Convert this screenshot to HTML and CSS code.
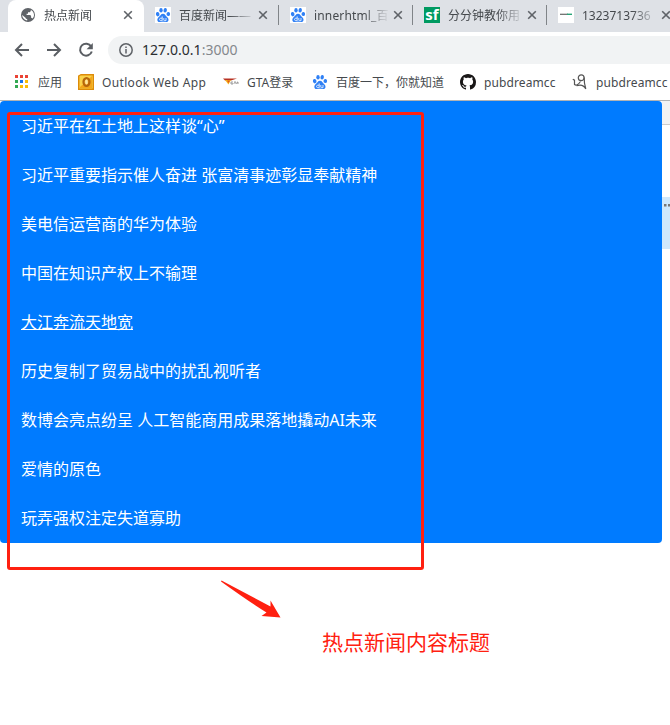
FILE: index.html
```html
<!DOCTYPE html>
<html lang="zh-CN">
<head>
<meta charset="utf-8">
<title>热点新闻</title>
<link rel="stylesheet" href="styles.css">
</head>
<body>
<svg class="defs" width="0" height="0">
  <symbol id="paw" viewBox="0 0 16 16">
    <g fill="#2f80f5">
      <ellipse cx="2.7" cy="7.2" rx="1.8" ry="2.2" transform="rotate(-12 2.7 7.2)"/>
      <ellipse cx="6" cy="3.2" rx="1.7" ry="2.3"/>
      <ellipse cx="10.2" cy="3.2" rx="1.7" ry="2.3" transform="rotate(10 10.2 3.2)"/>
      <ellipse cx="13.3" cy="7" rx="1.8" ry="2.1" transform="rotate(8 13.3 7)"/>
      <path d="M8 6.700c2.200 0 2.500 2 4 3.200 2.400 1.900 1.800 5.100-.7 5.200-1.300 0-2-.3-3.300-.3s-2 .3-3.300.3c-2.500-.1-3.300-3.200-.9-5.200C5.500 8.700 5.800 6.700 8 6.700z"/>
    </g>
    <path d="M7.200 9.400v4.300H5.700c-1.500 0-1.500-2.500 0-2.500h1.500M8.800 11v2q0 .7.700.7h1.500V11" fill="none" stroke="#fff" stroke-width=".8"/>
  </symbol>
  <symbol id="close" viewBox="0 0 10 10"><path d="M1.200 1.200l7.600 7.600M8.800 1.200L1.200 8.800" stroke="#5f6368" stroke-width="1.600"/></symbol>
</svg>
<header class="browser">
  <div class="tabs">
    <div class="tab active">
      <svg class="fav" viewBox="0 0 16 16"><circle cx="8" cy="8" r="7" fill="#5f6368"/><path d="M7.200 13.400c-2.900-.3-5-2.700-5-5.400l3.600 3v.7l1.400.4zM12.500 11.500c-.3-.6-.8-.7-1.400-.7V9.200L10.400 8H6.600V6.700H8V5.300h1.800l1-1.200V2.900c2 .8 3.200 2.800 3.200 5 0 1.400-.6 2.700-1.500 3.600z" fill="#fff"/></svg>
      <span class="title">热点新闻</span><svg class="x"><use href="#close"/></svg>
    </div>
    <div class="tab"><svg class="fav white"><use href="#paw"/></svg><span class="title">百度新闻——</span><svg class="x"><use href="#close"/></svg></div>
    <div class="tab"><svg class="fav white"><use href="#paw"/></svg><span class="title t3">innerhtml_百</span><svg class="x"><use href="#close"/></svg></div>
    <div class="tab"><span class="fav sf">sf</span><span class="title">分分钟教你用</span><svg class="x"><use href="#close"/></svg></div>
    <div class="tab"><svg class="fav white" viewBox="0 0 16 16"><path d="M2 7.300h8" stroke="#666" stroke-width="1.200"/><path d="M9 7.300h5" stroke="#27a578" stroke-width="1.400"/></svg><span class="title t5">1323713736</span><svg class="x"><use href="#close"/></svg></div>
  </div>
  <div class="toolbar">
    <svg class="nav" viewBox="0 0 16 16"><path d="M15 8H2M8 2L2 8l6 6"/></svg>
    <svg class="nav" viewBox="0 0 16 16"><path d="M1 8h13M8 2l6 6-6 6"/></svg>
    <svg class="nav" viewBox="0 0 16 16"><path d="M13.200 4.500A6 6 0 1 0 13.800 9.500"/><path d="M14.800 1v6.200H8.600z" class="solid"/></svg>
    <div class="address">
      <svg class="info" viewBox="0 0 14 14"><circle cx="7" cy="7" r="6.200"/><path d="M7 6v4.500M7 3.400v1.600"/></svg>
      <span class="url">127.0.0.1<span class="port">:3000</span></span>
    </div>
  </div>
  <nav class="bookmarks">
    <a class="bm b1"><svg viewBox="0 0 16 16"><path fill="#ea4335" d="M2 1h3v3H2zM7 1h3v3H7zM12 1h3v3h-3z"/><path fill="#34a853" d="M2 6h3v3H2zM2 11h3v3H2z"/><path fill="#1a73e8" d="M7 6h3v3H7z"/><path fill="#fbbc05" d="M12 6h3v3h-3zM7 11h3v3H7zM12 11h3v3h-3z"/></svg><span>应用</span></a>
    <a class="bm b2"><svg viewBox="0 0 16 16"><path d="M.7 2L3 .7h12.300v14.600H.7z" fill="#fbd34b" stroke="#dd8b09" stroke-width="1.400"/><path d="M2 13L14 2v12H2z" fill="#f3a71b"/><ellipse cx="8.500" cy="8" rx="3" ry="3.900" fill="none" stroke="#b5650c" stroke-width="2.200"/><ellipse cx="8.500" cy="8" rx="1.400" ry="2.500" fill="#ffe6a0"/></svg><span class="owa">Outlook Web App</span></a>
    <a class="bm b3"><svg viewBox="0 0 16 16"><path d="M0 4.500h14L8 6.500H2z" fill="#b83222"/><path d="M2 6h6l-2.500 4.500z" fill="#f4b51c"/><path d="M4 6.500h3L5.500 9z" fill="#e44e20"/><path d="M10 8H8v2h2V9M11 8h2M12 8v2M13.500 10l.8-2h.7v2" fill="none" stroke="#777" stroke-width=".7"/></svg><span>GTA登录</span></a>
    <a class="bm b4"><svg><use href="#paw"/></svg><span>百度一下，你就知道</span></a>
    <a class="bm b5"><svg viewBox="0 0 16 16"><path fill="#191717" fill-rule="evenodd" d="M8 0C3.580 0 0 3.580 0 8c0 3.540 2.290 6.530 5.470 7.590.4.070.55-.17.55-.38 0-.19-.01-.82-.01-1.490-2.010.37-2.530-.49-2.690-.94-.09-.23-.48-.94-.82-1.130-.28-.15-.68-.52-.01-.53.63-.01 1.080.58 1.230.82.720 1.210 1.870.87 2.330.66.070-.52.280-.87.510-1.070-1.780-.2-3.640-.89-3.640-3.950 0-.87.310-1.590.82-2.150-.08-.2-.36-1.020.08-2.120 0 0 .67-.21 2.200.82.640-.18 1.320-.27 2-.27s1.360.09 2 .27c1.530-1.040 2.200-.82 2.200-.82.440 1.100.16 1.920.08 2.120.51.56.82 1.270.82 2.150 0 3.070-1.870 3.750-3.650 3.950.29.25.54.73.54 1.480 0 1.070-.01 1.930-.01 2.200 0 .21.15.46.55.38A8.010 8.010 0 0 0 16 8c0-4.420-3.580-8-8-8z"/></svg><span class="pub">pubdreamcc</span></a>
    <a class="bm b6"><svg viewBox="0 0 16 16"><g fill="none" stroke="#555" stroke-width="1.200"><path d="M.8 5.200l1.700 1v4.300Q5 12.500 8.500 7.500"/><circle cx="9.200" cy="3.800" r="2.900"/><path d="M12.200 3.500q-.2 6 1.600 11.500Q11 9.500 4.500 11.800"/></g></svg><span class="pub">pubdreamcc</span></a>
  </nav>
</header>
<main class="page">
  <ul class="news">
    <li>习近平在红土地上这样谈“心”</li>
    <li>习近平重要指示催人奋进 张富清事迹彰显奉献精神</li>
    <li>美电信运营商的华为体验</li>
    <li>中国在知识产权上不输理</li>
    <li><span class="hover">大江奔流天地宽</span></li>
    <li>历史复制了贸易战中的扰乱视听者</li>
    <li>数博会亮点纷呈 人工智能商用成果落地撬动AI未来</li>
    <li>爱情的原色</li>
    <li>玩弄强权注定失道寡助</li>
  </ul>
  <aside class="panel"><div class="panel-head"></div><div class="panel-row"><svg viewBox="0 0 6 3"><path d="M0 0h2.500v2.500H0zM4 0h2v2.500H4z" fill="#777"/></svg></div></aside>
  <div class="frame"></div>
  <svg class="arrow" viewBox="0 0 62 40"><path d="M1.500 .5L50.500 26.500V20.500L60.500 37.500 41.500 36 46.500 32.500Q28 21 1 1.500z" fill="#ff2010"/></svg>
  <p class="caption">热点新闻内容标题</p>
</main>
</body>
</html>
```
FILE: styles.css
```css
* { box-sizing: border-box; }
body {
  margin: 0;
  width: 670px;
  height: 725px;
  overflow: hidden;
  background: #fff;
  font-family: "Noto Sans", "Noto Sans CJK SC", sans-serif;
}
.defs { position: absolute; }
.browser { height: 101px; border-bottom: 1px solid #b1b3b5; overflow: hidden; }
.tabs { display: flex; height: 32px; padding-left: 8px; background: #dee1e6; }
.tab {
  display: flex;
  align-items: center;
  flex: 0 0 134px;
  height: 30px;
  padding-left: 11px;
  background: linear-gradient(#808488, #808488) right 0 top 5px / 1px 20px no-repeat;
}
.tab.active {
  flex-basis: 136px;
  height: 32px;
  padding: 0 0 2px 12px;
  background: #fff;
  border-radius: 8px 8px 0 0;
}
.tab:nth-child(2) { flex-basis: 135px; }
.tab:last-child { background: none; }
.fav { width: 16px; height: 16px; flex: none; }
.white { background: #fff; }
.sf { background: #009a61; color: #fff; font: bold 15px/15px "Open Sans", sans-serif; text-align: center; }
.title {
  width: 76px;
  margin-left: 8px;
  padding-top: 1px;
  white-space: nowrap;
  font-size: 12px;
  line-height: 20px;
  color: #45494d;
  -webkit-mask-image: linear-gradient(90deg, #000 50px, transparent 76px);
  mask-image: linear-gradient(90deg, #000 50px, transparent 76px);
}
.t3 { letter-spacing: 0.150px; }
.x { width: 10px; height: 10px; flex: none; margin-left: 3px; }
.toolbar { display: flex; align-items: center; height: 36px; padding-left: 14px; }
.nav { width: 16px; height: 16px; margin-right: 16px; fill: none; stroke: #5a5e63; stroke-width: 2; }
.nav .solid { fill: #5a5e63; stroke: none; }
.address {
  display: flex;
  align-items: center;
  flex: 1;
  height: 28px;
  margin-left: -2px;
  padding-left: 11px;
  background: #f1f3f4;
  border-radius: 14px 0 0 14px;
}
.info { width: 14px; height: 14px; fill: none; stroke: #5f6368; stroke-width: 1.500; }
.url { margin-left: 9px; font-size: 14px; line-height: 20px; letter-spacing: 0.040px; color: #2b2e31; }
.port { color: #84888c; }
.bookmarks { display: flex; height: 32px; font-size: 12px; color: #45494d; }
.bm { display: flex; align-items: center; flex: none; height: 28px; white-space: nowrap; }
.bm svg { width: 16px; height: 16px; margin-right: 8px; }
.b1 { width: 65px; margin-left: 13px; }
.b1 svg { margin-right: 9px; }
.b2 { width: 145px; }
.b3 { width: 89px; }
.b4 { width: 148px; }
.b5 { width: 112px; }
.owa { letter-spacing: 0.350px; }
.pub { letter-spacing: 0.100px; }
.page { position: relative; display: flex; height: 624px; }
.news {
  flex: 0 0 662px;
  height: 442px;
  margin: 0;
  padding: 1px 0 0;
  list-style: none;
  background: #007bff;
  border-radius: 4px;
  color: #fff;
}
.news li { height: 49px; padding: 12px 21px 13px; font-size: 16px; line-height: 24px; white-space: nowrap; }
.hover { text-decoration: underline; }
.panel { flex: 1; }
.panel-head { height: 24px; background: #f3f3f3; border-bottom: 1px solid #ccc; }
.panel-row { display: flex; height: 52px; margin-top: 72px; padding: 7px 0 0 2px; background: #cfe8fc; }
.panel-row svg { width: 6px; height: 3px; }
.frame { position: absolute; left: 7px; top: 11px; width: 417px; height: 458px; border: 3px solid #ff2010; border-radius: 3px; }
.arrow { position: absolute; left: 220px; top: 479px; width: 62px; height: 40px; }
.caption {
  position: absolute;
  left: 322px;
  top: 526px;
  margin: 0;
  font-size: 21px;
  line-height: 30px;
  color: #ff2010;
  white-space: nowrap;
}
```
